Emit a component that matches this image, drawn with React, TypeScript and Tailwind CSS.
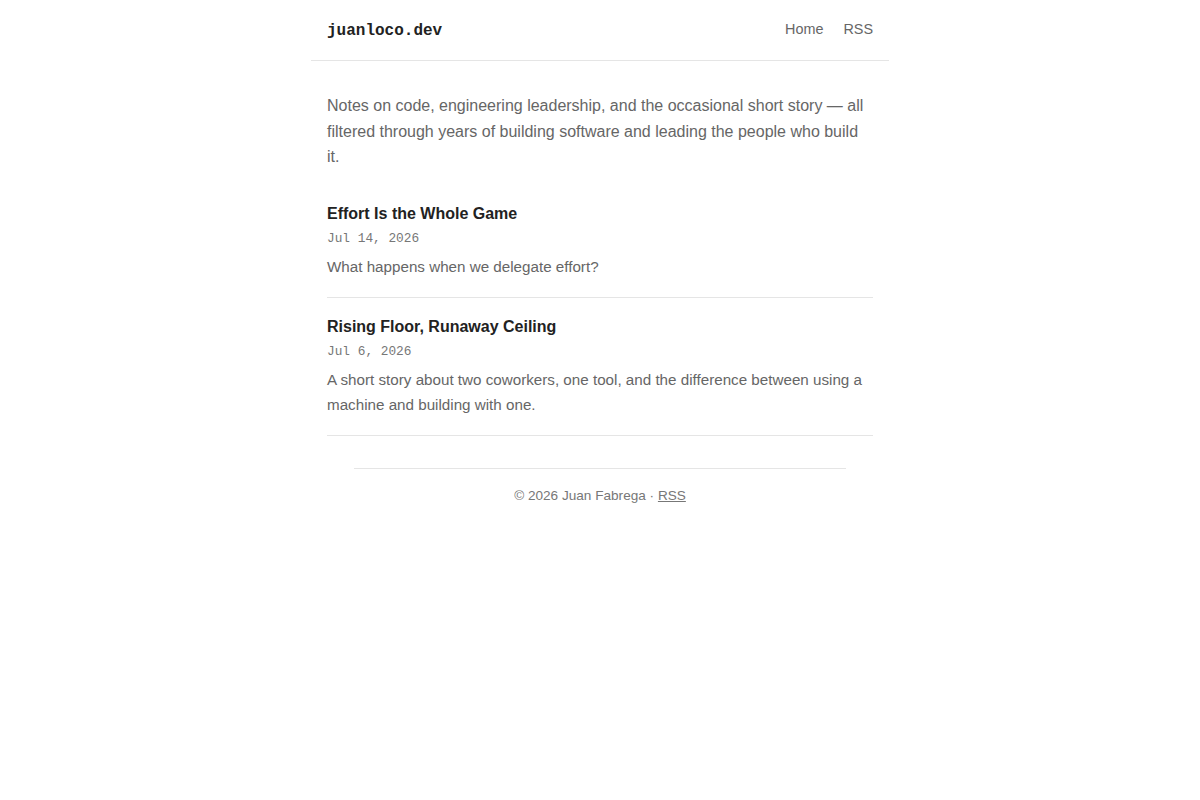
const posts = [
  {
    title: 'Effort Is the Whole Game',
    date: 'Jul 14, 2026',
    summary: 'What happens when we delegate effort?',
  },
  {
    title: 'Rising Floor, Runaway Ceiling',
    date: 'Jul 6, 2026',
    summary:
      'A short story about two coworkers, one tool, and the difference between using a machine and building with one.',
  },
];

const sans = "font-['Liberation_Sans',Arial,sans-serif]";
const mono = "font-['Liberation_Mono','Courier_New',monospace]";

export default function App() {
  return (
    <div className={`min-h-screen bg-white ${sans}`}>
      <div className="mx-auto max-w-[578px]">
        <header className="flex h-[61px] items-center justify-between border-b border-[#e5e5e5] px-4">
          <a href="#" className={`${mono} mt-[1px] text-[16px] font-bold text-[#222]`}>
            juanloco.dev
          </a>
          <nav className="flex gap-5 text-[14.4px] text-[#666]">
            <a href="#">Home</a>
            <a href="#">RSS</a>
          </nav>
        </header>

        <main className="px-4 pt-8">
          <p className="text-[16px] leading-[1.6] text-[#666]">
            Notes on code, engineering leadership, and the occasional short story — all filtered through years of
            building software and leading the people who build it.
          </p>

          <div className="mt-8">
            {posts.map((post, i) => (
              <article
                key={post.title}
                className={`border-b border-[#e5e5e5] pb-[18px] ${i > 0 ? 'pt-[17px]' : ''}`}
              >
                <h2 className="text-[16px] font-bold leading-6 text-[#222]">
                  <a href="#">{post.title}</a>
                </h2>
                <div className={`${mono} mt-[3px] text-[12.8px] leading-5 text-[#777]`}>{post.date}</div>
                <p className="mt-[5px] text-[15.2px] leading-[25px] text-[#666]">{post.summary}</p>
              </article>
            ))}
          </div>
        </main>

        <footer className="mx-auto mt-8 w-[492px] border-t border-[#e5e5e5] pt-[17px] text-center text-[13.6px] leading-5 text-[#777]">
          © 2026 Juan Fabrega · <a href="#" className="underline">RSS</a>
        </footer>
      </div>
    </div>
  );
}
